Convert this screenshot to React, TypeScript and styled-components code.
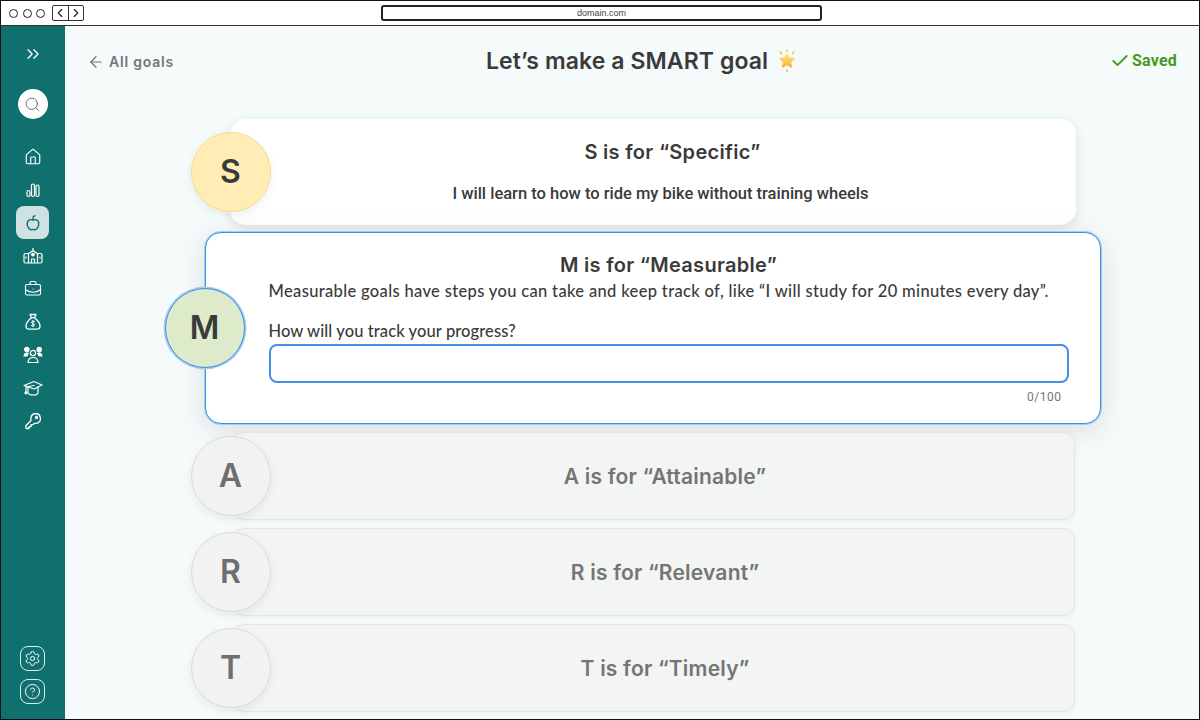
import React from 'react';
import styled, { createGlobalStyle } from 'styled-components';
import {
  ArrowLeft,
  BriefcaseBusiness,
  Check,
  ChevronLeft,
  ChevronRight,
  ChevronsRight,
  CircleHelp,
  House,
  Search,
  Settings,
} from 'lucide-react';

const GlobalStyle = createGlobalStyle`
  html, body {
    margin: 0;
    padding: 0;
    background: #fff;
  }
  * {
    box-sizing: border-box;
  }
`;

const heading = '"Inter", "Liberation Sans", sans-serif';
const body = '"Lato", "Noto Sans", sans-serif';

function BarsIcon() {
  return (
    <svg width="18" height="18" viewBox="0 0 18 18" fill="none" stroke="currentColor" strokeWidth="1.2">
      <rect x="3" y="9.500" width="3" height="6" rx="1.500" />
      <rect x="7.500" y="3" width="3" height="12.500" rx="1.500" />
      <rect x="12" y="4" width="3" height="11.500" rx="1.500" />
    </svg>
  );
}

function AppleIcon() {
  return (
    <svg width="18" height="18" viewBox="0 0 18 18" fill="none" stroke="currentColor" strokeWidth="1.400" strokeLinecap="round">
      <path d="M9 6.200C7.600 5.300 3.400 5.200 3.200 9.600c-.1 3.400 2.400 6.200 4 6.200.8 0 1.200-.4 1.800-.4s1 .4 1.800.4c1.600 0 4.100-2.800 4-6.200C14.600 5.200 10.400 5.300 9 6.200z" />
      <path d="M9 6V4c0-1.200.8-2 2-2.200" />
    </svg>
  );
}

function SchoolIcon() {
  return (
    <svg width="20" height="18" viewBox="0 0 20 18" fill="none" stroke="currentColor" strokeWidth="1.200" strokeLinejoin="round">
      <path d="M6 6.500H2.500a1.500 1.500 0 0 0-1.500 1.500v6.500a1.500 1.500 0 0 0 1.500 1.500h15a1.500 1.500 0 0 0 1.500-1.500V8a1.500 1.500 0 0 0-1.500-1.500H14" />
      <path d="M5.500 16V6.800L10 3.500l4.500 3.300V16" />
      <path d="M10 3.500V1" />
      <circle cx="10" cy="7.500" r="1.300" fill="currentColor" />
      <path d="M8.500 16v-4h3v4M3 9.500v2M17 9.500v2" />
    </svg>
  );
}

function MoneyBagIcon() {
  return (
    <svg width="18" height="18" viewBox="0 0 18 18" fill="none" stroke="currentColor" strokeWidth="1.300" strokeLinejoin="round" strokeLinecap="round">
      <path d="M6 1.500h6l-1.500 3.200h-3z" />
      <path d="M7.500 4.700C4.600 7 2 10.300 2 13c0 2 1.400 3.200 3.400 3.200h7.200c2 0 3.400-1.200 3.400-3.200 0-2.700-2.600-6-5.500-8.300" />
      <path d="M10.600 8.600c-.5-.6-2.900-.9-3.100.6-.2 1.600 3.200 1 3 2.700-.2 1.400-2.600 1.200-3.200.5M9 7.500v6" strokeWidth="1" />
    </svg>
  );
}

function PeopleIcon() {
  return (
    <svg width="20" height="18" viewBox="0 0 20 18" fill="none" stroke="currentColor" strokeWidth="1.200">
      <circle cx="3.800" cy="3.600" r="2.200" fill="currentColor" />
      <circle cx="16.200" cy="3.600" r="2.200" fill="currentColor" />
      <path d="M.5 10.500c0-2.600 1.400-4 3.400-4 1 0 1.700.3 2.300.8-1 .8-1.600 1.900-1.700 3.200z" fill="currentColor" stroke="none" />
      <path d="M19.500 10.500c0-2.600-1.400-4-3.400-4-1 0-1.700.3-2.300.8 1 .8 1.600 1.900 1.700 3.200z" fill="currentColor" stroke="none" />
      <circle cx="10" cy="7" r="2.600" />
      <path d="M5 16.500c0-3.200 2.200-5 5-5s5 1.800 5 5z" strokeLinejoin="round" />
    </svg>
  );
}

function CapIcon() {
  return (
    <svg width="20" height="18" viewBox="0 0 20 18" fill="none" stroke="currentColor" strokeWidth="1.200" strokeLinejoin="round" strokeLinecap="round">
      <path d="M1 6.500L11 2.500l8 3.500-8 4z" />
      <path d="M5 8.300v5.200c0 1.500 2.600 2.500 5.500 2.500s4.500-1 4.500-2.500V8.200" />
      <path d="M11 6.500L3 8v4.500" />
      <circle cx="3" cy="13.800" r="1" fill="currentColor" />
    </svg>
  );
}

function KeyIcon() {
  return (
    <svg width="18" height="18" viewBox="0 0 18 18" fill="none" stroke="currentColor" strokeWidth="1.300" strokeLinejoin="round">
      <path d="M11.500 1.500a5 5 0 0 1 1.300 9.800c-.8.200-1.700.2-2.400 0L9 12.700H7v2H5v1.800H2V13.500l5-5c-.2-.7-.3-1.500-.1-2.300a5 5 0 0 1 4.600-4.700z" />
      <circle cx="12.500" cy="5.500" r="1" />
    </svg>
  );
}

function StarEmoji() {
  return (
    <svg width="22" height="24" viewBox="0 0 22 24">
      <defs>
        <linearGradient id="star" x1="0" y1="0" x2="0" y2="1">
          <stop offset="0" stopColor="#ffe98f" />
          <stop offset="1" stopColor="#fbb02c" />
        </linearGradient>
      </defs>
      <path
        d="M11 4.500l2 4.600 5 .5-3.800 3.300 1.200 5-4.400-2.600-4.400 2.600 1.200-5L4 9.600l5-.5z"
        fill="url(#star)"
        stroke="url(#star)"
        strokeWidth="1.600"
        strokeLinejoin="round"
      />
      <path d="M11 20l1.200 2.600h-2.400z" fill="#f59a1c" />
      <path d="M4 2.500l1.600 2.600M18 2.500l-1.600 2.600M11 .8v1.800" stroke="#f9b233" strokeWidth="1.100" strokeLinecap="round" />
    </svg>
  );
}

function App() {
  return (
    <>
      <GlobalStyle />
      <Frame>
        <BrowserBar>
          <Dots>
            <Dot />
            <Dot />
            <Dot />
          </Dots>
          <NavButtons>
            <NavButton>
              <ChevronLeft size={14} strokeWidth={2} />
            </NavButton>
            <NavButton>
              <ChevronRight size={14} strokeWidth={2} />
            </NavButton>
          </NavButtons>
          <AddressBar>domain.com</AddressBar>
        </BrowserBar>
        <Body>
          <Sidebar>
            <Expand>
              <ChevronsRight size={20} strokeWidth={1.6} />
            </Expand>
            <SearchButton>
              <Search size={17} strokeWidth={1.3} />
            </SearchButton>
            <NavList>
              <NavItem><House size={18} strokeWidth={1.5} /></NavItem>
              <NavItem><BarsIcon /></NavItem>
              <NavItem $active><AppleIcon /></NavItem>
              <NavItem><SchoolIcon /></NavItem>
              <NavItem><BriefcaseBusiness size={18} strokeWidth={1.5} /></NavItem>
              <NavItem><MoneyBagIcon /></NavItem>
              <NavItem><PeopleIcon /></NavItem>
              <NavItem><CapIcon /></NavItem>
              <NavItem><KeyIcon /></NavItem>
            </NavList>
            <FooterList>
              <FooterButton><Settings size={17} strokeWidth={1.4} /></FooterButton>
              <FooterButton><CircleHelp size={17} strokeWidth={1.4} /></FooterButton>
            </FooterList>
          </Sidebar>
          <Main>
            <Header>
              <BackLink>
                <ArrowLeft size={18} strokeWidth={1.6} />
                All goals
              </BackLink>
              <Title>
                Let’s make a SMART goal
                <StarEmoji />
              </Title>
              <Saved>
                <Check size={20} strokeWidth={2.2} />
                Saved
              </Saved>
            </Header>
            <CardList>
              <DoneCard>
                <Badge $bg="#ffedb5" $line="#fbdc85" $left={-39}>S</Badge>
                <DoneTitle>S is for “Specific”</DoneTitle>
                <Answer>I will learn to how to ride my bike without training wheels</Answer>
              </DoneCard>
              <ActiveCard>
                <ActiveBadge $bg="#deebcb" $line="#3b8fe6" $left={-41}>M</ActiveBadge>
                <CardTitle>M is for “Measurable”</CardTitle>
                <Description>
                  Measurable goals have steps you can take and keep track of, like “I will study for 20 minutes every day”.
                </Description>
                <FieldLabel htmlFor="progress">How will you track your progress?</FieldLabel>
                <TextField id="progress" />
                <Counter>0/100</Counter>
              </ActiveCard>
              {[
                ['A', 'A is for “Attainable”'],
                ['R', 'R is for “Relevant”'],
                ['T', 'T is for “Timely”'],
              ].map(([letter, label]) => (
                <LockedCard key={letter}>
                  <Badge $bg="#f2f2f2" $line="#dcdcdc" $left={-42} $muted>{letter}</Badge>
                  <LockedTitle>{label}</LockedTitle>
                </LockedCard>
              ))}
            </CardList>
          </Main>
        </Body>
      </Frame>
    </>
  );
}

const Frame = styled.div`
  width: 1200px;
  height: 720px;
  display: flex;
  flex-direction: column;
  border: 1px solid #111;
  overflow: hidden;
`;

const BrowserBar = styled.div`
  position: relative;
  height: 25px;
  flex: none;
  display: flex;
  align-items: center;
  padding-left: 8px;
  background: #fff;
  border-bottom: 1px solid #333;
`;

const Dots = styled.div`
  display: flex;
  gap: 4.5px;
`;

const Dot = styled.span`
  width: 9px;
  height: 9px;
  border: 1.5px solid #222;
  border-radius: 50%;
`;

const NavButtons = styled.div`
  display: flex;
  width: 32px;
  height: 16px;
  margin-left: 7px;
  border: 1px solid #333;
  border-radius: 2px;
`;

const NavButton = styled.span`
  flex: 1;
  display: flex;
  align-items: center;
  justify-content: center;
  color: #222;
  & + & {
    border-left: 1px solid #333;
  }
`;

const AddressBar = styled.div`
  position: absolute;
  left: 380px;
  top: 4px;
  width: 441px;
  height: 16px;
  border: 2px solid #222;
  border-radius: 3px;
  font: 9px/12px "Liberation Sans", sans-serif;
  text-align: center;
  color: #444;
`;

const Body = styled.div`
  flex: 1;
  min-height: 0;
  display: flex;
`;

const Sidebar = styled.nav`
  width: 64px;
  flex: none;
  display: flex;
  flex-direction: column;
  align-items: center;
  padding: 19px 1px 15px 0;
  background: #10706e;
  color: #fff;
`;

const Expand = styled.div`
  height: 18px;
  display: flex;
  align-items: center;
`;

const SearchButton = styled.div`
  width: 30px;
  height: 30px;
  margin-top: 26px;
  display: flex;
  align-items: center;
  justify-content: center;
  background: #fff;
  border-radius: 50%;
  color: #666;
`;

const NavList = styled.div`
  margin-top: 21px;
  display: flex;
  flex-direction: column;
`;

const NavItem = styled.div<{ $active?: boolean }>`
  width: 33px;
  height: 33px;
  display: flex;
  align-items: center;
  justify-content: center;
  border-radius: 8px;
  background: ${(p) => (p.$active ? '#cfe2e2' : 'transparent')};
  color: ${(p) => (p.$active ? '#10706e' : '#fff')};
`;

const FooterList = styled.div`
  margin-top: auto;
  display: flex;
  flex-direction: column;
  gap: 8px;
`;

const FooterButton = styled.div`
  width: 25px;
  height: 25px;
  display: flex;
  align-items: center;
  justify-content: center;
  border: 1px solid #dcecec;
  border-radius: 8px;
`;

const Main = styled.main`
  flex: 1;
  min-width: 0;
  display: flex;
  flex-direction: column;
  background: #f5fbfb;
`;

const Header = styled.header`
  height: 93px;
  flex: none;
  display: flex;
  align-items: flex-start;
  justify-content: space-between;
  padding: 21px 22px 0 22px;
`;

const BackLink = styled.div`
  display: flex;
  align-items: center;
  gap: 4px;
  margin-top: 5px;
  font: 600 14px/20px ${heading};
  letter-spacing: 0.8px;
  color: #757575;
`;

const Title = styled.h1`
  display: flex;
  align-items: center;
  gap: 8px;
  margin: 0;
  font: 600 23px/28px ${heading};
  letter-spacing: 0.1px;
  color: #3a3a3a;
`;

const Saved = styled.div`
  display: flex;
  align-items: center;
  gap: 2px;
  margin-top: 4px;
  font: 700 16px/20px Roboto, sans-serif;
  letter-spacing: 0.2px;
  color: #459a20;
`;

const CardList = styled.div`
  display: flex;
  flex-direction: column;
  align-items: center;
  gap: 8px;
  padding-left: 41px;
`;

const Card = styled.section`
  position: relative;
  display: flex;
  flex-direction: column;
  align-items: center;
`;

const DoneCard = styled(Card)`
  width: 846px;
  height: 106px;
  padding: 20px 0 0 16px;
  background: #fff;
  border-radius: 16px;
  box-shadow: 0 3px 12px rgba(0, 0, 0, 0.1);
`;

const ActiveCard = styled(Card)`
  width: 896px;
  height: 192px;
  margin-top: -1px;
  align-items: stretch;
  padding: 19px 31px 0 63px;
  background: #fff;
  border: 1.5px solid #3b8fe6;
  border-radius: 16px;
  box-shadow: 0 0 0 1px #a7cdf5, 0 6px 28px rgba(0, 0, 0, 0.12);
`;

const LockedCard = styled(Card)`
  width: 843px;
  height: 88px;
  margin-left: 1px;
  padding: 2px 0 0 24px;
  justify-content: center;
  background: #f3f4f4;
  border: 1px solid #e3e4e4;
  border-radius: 12px;
  box-shadow: 0 1px 6px rgba(0, 0, 0, 0.05);
`;

const Badge = styled.div<{ $bg: string; $line: string; $left: number; $muted?: boolean }>`
  position: absolute;
  left: ${(p) => p.$left}px;
  top: 50%;
  width: 80px;
  height: 80px;
  margin-top: -40px;
  display: flex;
  align-items: center;
  justify-content: center;
  background: ${(p) => p.$bg};
  border: 1px solid ${(p) => p.$line};
  border-radius: 50%;
  box-shadow: 0 3px 10px rgba(0, 0, 0, 0.07);
  font: 600 32px/1 ${heading};
  color: ${(p) => (p.$muted ? '#6e6e6e' : '#3a3a3a')};
`;

const ActiveBadge = styled(Badge)`
  box-shadow: 0 0 0 1.5px #a7cdf5;
`;

const CardTitle = styled.h2`
  margin: 0;
  text-align: center;
  font: 600 20px/26px ${heading};
  letter-spacing: 0.3px;
  color: #3a3a3a;
`;

const DoneTitle = styled(CardTitle)`
  margin-left: 24px;
`;

const LockedTitle = styled(CardTitle)`
  font-size: 21px;
  letter-spacing: 0.2px;
  color: #757575;
`;

const Answer = styled.p`
  margin: 19px 0 0;
  font: 500 16.5px/20px Roboto, sans-serif;
  color: #3a3a3a;
`;

const Description = styled.p`
  margin: 2px 0 0;
  white-space: nowrap;
  font: 500 16.5px/22px ${body};
  letter-spacing: 0.34px;
  color: #3a3a3a;
`;

const FieldLabel = styled.label`
  margin-top: 18px;
  font: 500 16.5px/22px ${body};
  letter-spacing: 0.1px;
  color: #3a3a3a;
`;

const TextField = styled.input`
  height: 39px;
  margin-top: 2px;
  border: 2px solid #4291e3;
  border-radius: 8px;
  background: #fff;
  outline: none;
`;

const Counter = styled.div`
  margin-top: 6px;
  padding-right: 7px;
  text-align: right;
  font: 400 12px/16px Roboto, sans-serif;
  letter-spacing: 0.5px;
  color: #757575;
`;

export default App;
